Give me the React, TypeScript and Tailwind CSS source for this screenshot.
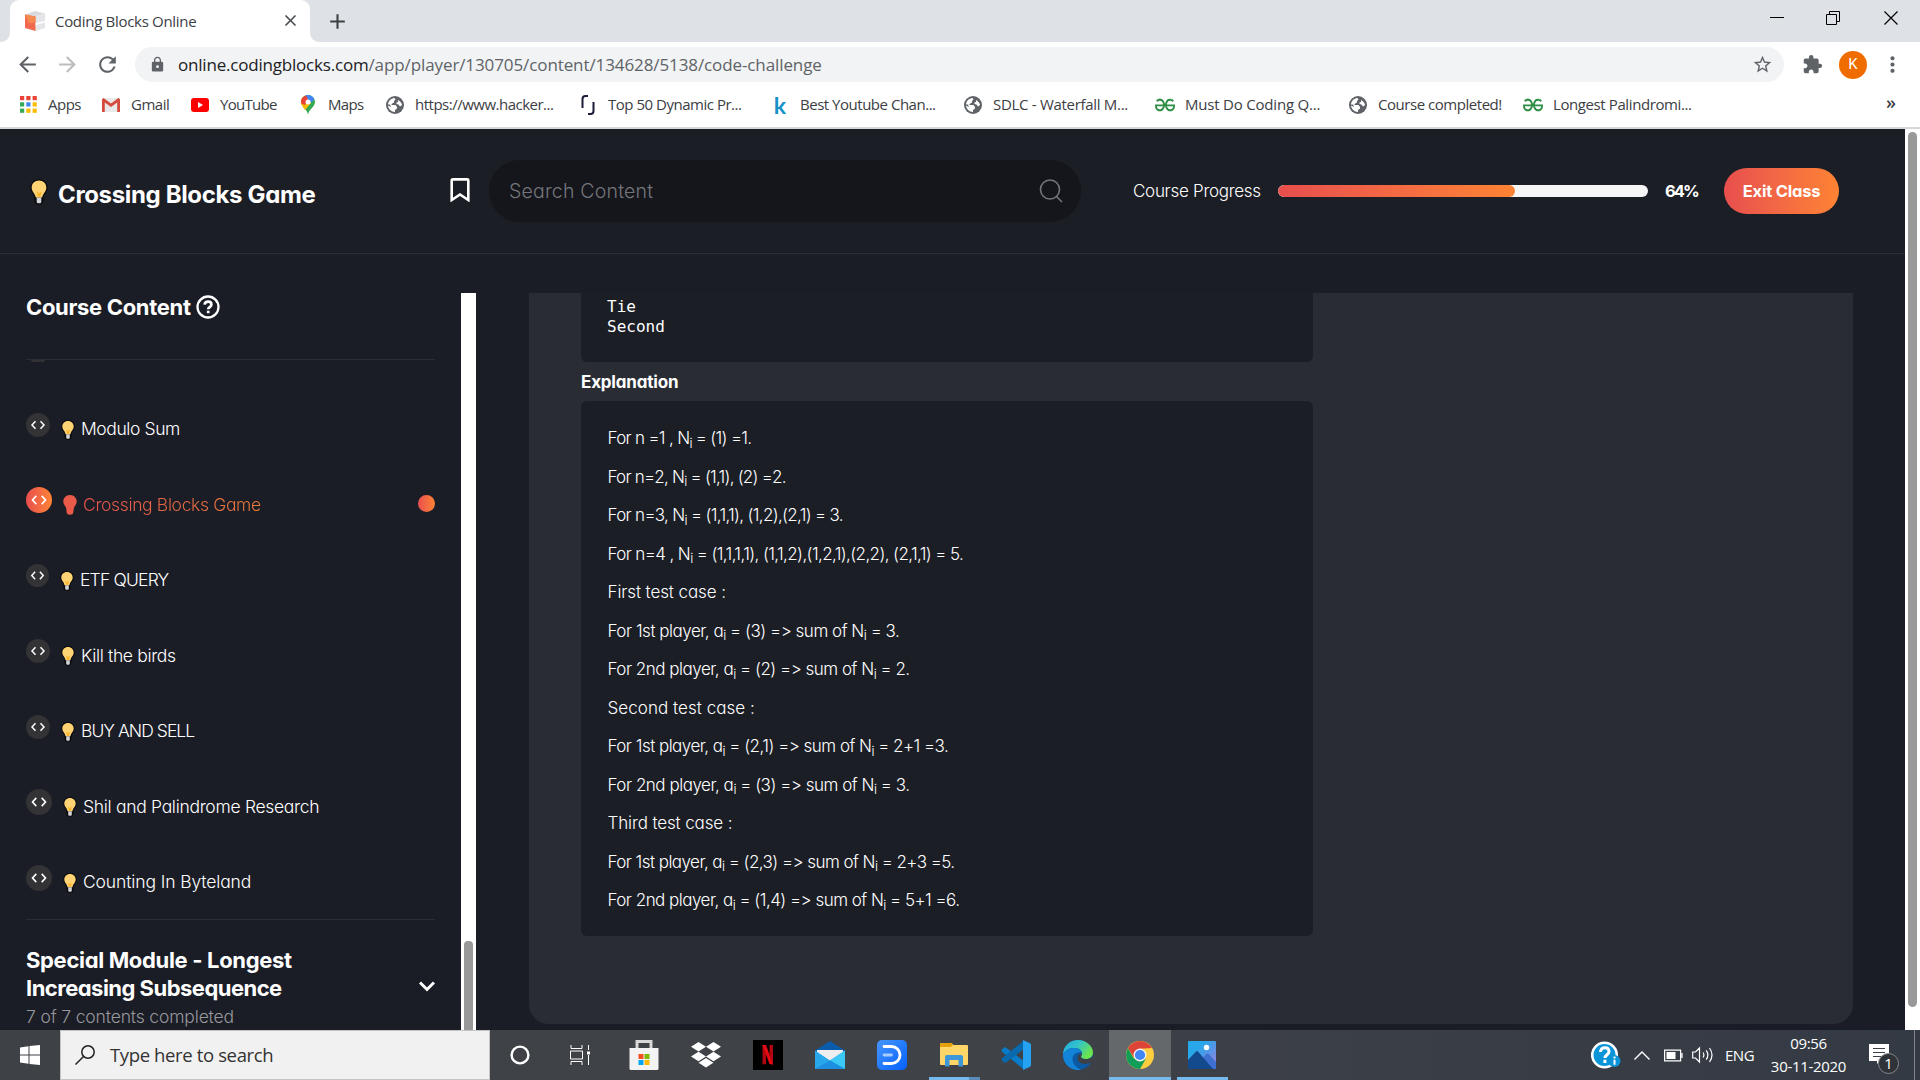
import React, { Fragment, ReactNode } from 'react';
import {
  MdAdd,
  MdArrowBack,
  MdArrowForward,
  MdClose,
  MdExtension,
  MdLock,
  MdMoreVert,
  MdRefresh,
  MdStarBorder,
} from 'react-icons/md';
import { SiGeeksforgeeks } from 'react-icons/si';

/* ---------- small drawings ---------- */

const bulbOutline =
  'M7 0C3 0 .3 2.900.3 6.600c0 2.600 1.700 4 2.600 6 .6 1.400.5 3 .8 5 .2 1.500 1.500 2.200 3.300 2.200s3.100-.7 3.300-2.200c.3-2 .2-3.600.8-5 .9-2 2.600-3.400 2.600-6C13.700 2.900 11 0 7 0z';

function Bulb({ className, flat = false }: { className: string; flat?: boolean }) {
  if (flat) {
    return (
      <svg viewBox="0 0 14 20" className={className}>
        <path d={bulbOutline} fill="#ea5a48" />
      </svg>
    );
  }
  return (
    <svg viewBox="0 0 14 20" className={className}>
      <path d={bulbOutline} fill="#08090c" />
      <path d="M7 1C3.700 1 1.300 3.400 1.300 6.600c0 3 2.700 4.400 3.200 7.600h5c.5-3.200 3.200-4.600 3.200-7.600C12.700 3.400 10.300 1 7 1z" fill="#ffd274" />
      <path d="M5 9.500l1.200 4.500h1.600L9 9.500 7 11z" fill="#fcb52a" />
      <path d="M5.200 14.200h3.600v3.600c0 .6-.6 1-1.800 1s-1.800-.4-1.800-1z" fill="#d4d4d8" />
    </svg>
  );
}

function CodeGlyph({ className }: { className: string }) {
  return (
    <svg viewBox="0 0 24 24" className={className} fill="none" stroke="currentColor" strokeWidth="1.500">
      <path d="M9.500 8.200L6 12l3.500 3.800M14.500 8.200L18 12l-3.500 3.800" />
    </svg>
  );
}

function Favicon() {
  return (
    <svg viewBox="0 0 20 20" className="h-5 w-5">
      <path d="M0 3.500L10 0l10 2.500-9.500 3z" fill="#d9dadd" />
      <path d="M10.500 5L20 2.500V17l-9.500 3z" fill="#e4e5e8" />
      <path d="M0 3.500L10.500 5.500v6L10.500 20 0 17z" fill="#f06a50" />
      <path d="M0 3.500L10.500 5.500v6L4 12.500z" fill="#f58a50" />
      <path d="M10.500 12l9.500-2v1.500l-9.500 2.500z" fill="#fff" />
    </svg>
  );
}

function AppsGrid() {
  const colors = ['#ea4335', '#ea4335', '#ea4335', '#34a853', '#4285f4', '#fbbc04', '#34a853', '#fbbc04', '#fbbc04'];
  return (
    <svg viewBox="0 0 17 17" className="h-[17px] w-[17px]">
      {colors.map((c, i) => (
        <rect key={i} x={(i % 3) * 6.3} y={Math.floor(i / 3) * 6.3} width="4.2" height="4.2" fill={c} />
      ))}
    </svg>
  );
}

function GmailIcon() {
  return (
    <svg viewBox="0 0 18 14" className="h-[14px] w-[18px]">
      <rect width="18" height="14" rx="1" fill="#e9e9e9" />
      <path d="M0 1.200v12.800h2.800V4.500L9 9l6.200-4.500V14H18V1.200L16.400 0 9 5.500 1.600 0z" fill="#d54b3d" />
    </svg>
  );
}

function YoutubeIcon() {
  return (
    <svg viewBox="0 0 18 14" className="h-[14px] w-[18px]">
      <rect width="18" height="14" rx="3" fill="#f00" />
      <path d="M7 4l5 3-5 3z" fill="#fff" />
    </svg>
  );
}

function MapsPin() {
  return (
    <svg viewBox="0 0 14 20" className="h-5 w-[14px]">
      <path d="M7 20c0-5 7-8 7-13a7 7 0 0 0-14 0c0 5 7 8 7 13z" fill="#34a853" />
      <path d="M.8 10.200A7 7 0 0 1 1.600 2.500L7 7l-4.700 5.600C1.700 11.800 1.100 11 .8 10.200z" fill="#fbbc04" />
      <path d="M1.600 2.500A7 7 0 0 1 4.800.4L9 4.500 3.500 10 .3 8.500C-.4 6 .2 4.200 1.600 2.500z" fill="#ea4335" />
      <path d="M4.800.35A7 7 0 0 1 13.300 4L8 10 7 4z" fill="#4285f4" />
      <path d="M2.200 12.500L8.500 5l1.500 3-6 7z" fill="#fbbc04" />
      <circle cx="7" cy="7" r="2.500" fill="#fff" />
    </svg>
  );
}

function Globe() {
  return (
    <svg viewBox="0 0 18 18" className="h-[18px] w-[18px]">
      <circle cx="9" cy="9" r="9" fill="#5f6368" />
      <path d="M2 8.500C2.300 5 5 2.300 8.500 2L9.500 3.500 8 5v1.500L5.500 8v1h4l1.500 2v1.500L9 14v2C5.300 15.800 2.300 13 2 9.500l3 1.500L4 8.500z" fill="#fff" />
      <path d="M12 4c2.200 1.200 3.800 3 4 5l-2 1.500-1.500-2-2-.5V6.500l1.500-.5z" fill="#fff" />
    </svg>
  );
}

function HookIcon() {
  return (
    <svg viewBox="0 0 14 20" className="h-5 w-[14px]" fill="none" stroke="#1d1b3a" strokeWidth="2">
      <path d="M1.500 13V4Q1.500 1 4.500 1H7M12.500 7v9q0 3-3 3H7" />
    </svg>
  );
}

/* ---------- browser chrome ---------- */

function TabStrip() {
  return (
    <div className="flex h-[42px] shrink-0 items-stretch bg-[#dee1e6] text-[#3c4043]">
      <div className="flex w-[10px] items-end bg-white">
        <div className="h-full w-full rounded-br-[9px] bg-[#dee1e6]" />
      </div>
      <div className="flex w-[300px] bg-[#dee1e6]">
        <div className="flex w-full items-center rounded-t-[9px] bg-white pb-px pl-[15px] pr-[10px]">
          <Favicon />
          <span className="ml-[10px] grow whitespace-nowrap text-[15px] leading-5 tracking-[-0.3px]">Coding Blocks Online</span>
          <MdClose className="h-[19px] w-[19px] text-[#45494d]" />
        </div>
      </div>
      <div className="flex w-[10px] bg-white">
        <div className="h-full w-full rounded-bl-[9px] bg-[#dee1e6]" />
      </div>
      <div className="flex grow items-center justify-between pl-[5px] pr-[22px]">
        <MdAdd className="h-[25px] w-[25px]" />
        <div className="flex items-center pb-[6px] text-black">
          <svg viewBox="0 0 14 14" className="mr-[42px] h-[14px] w-[14px]">
            <path d="M0 6.500h14" stroke="currentColor" />
          </svg>
          <svg viewBox="0 0 14 14" className="mr-[44px] h-[14px] w-[14px]" fill="none" stroke="currentColor">
            <path d="M.5 3.500h10v10H.500zM3.500 3V.5h10v10H11" />
          </svg>
          <svg viewBox="0 0 14 14" className="h-[14px] w-[14px]" stroke="currentColor" strokeWidth="1.200">
            <path d="M.5.5l13 13M13.500.5l-13 13" />
          </svg>
        </div>
      </div>
    </div>
  );
}

function Toolbar() {
  return (
    <div className="flex h-[45px] shrink-0 items-center bg-white pl-[15px] text-[#5f6368]">
      <MdArrowBack className="h-[25px] w-[25px]" />
      <MdArrowForward className="ml-[15px] h-[25px] w-[25px] text-[#babcbe]" />
      <MdRefresh className="ml-[15px] h-[25px] w-[25px]" />
      <div className="ml-[15px] flex h-[35px] w-[1649px] items-center rounded-full bg-[#f1f3f4] pl-[14px] pr-[11px]">
        <MdLock className="h-[17px] w-[17px]" />
        <div className="ml-[12px] grow whitespace-nowrap text-[17px]">
          <span className="tracking-[-0.2px] text-[#202124]">online.codingblocks.com</span>
          <span className="tracking-[-0.1px]">/app/player/130705/content/134628/5138/code-challenge</span>
        </div>
        <MdStarBorder className="h-[21px] w-[21px]" />
      </div>
      <MdExtension className="ml-[18px] h-[21px] w-[21px]" />
      <div className="ml-[16px] flex h-7 w-7 items-center justify-center rounded-full bg-[#ef6c00] font-['Roboto'] text-[15px] text-white">K</div>
      <MdMoreVert className="ml-[13px] h-[25px] w-[25px]" />
    </div>
  );
}

const globe = <Globe />;
const gfg = <SiGeeksforgeeks className="h-5 w-5 scale-y-125 text-[#2f8d46]" />;

const bookmarks: { label: string; icon: ReactNode; cls: string; track: string }[] = [
  { label: 'Apps', icon: <AppsGrid />, cls: 'w-[83px]', track: 'tracking-[-0.5px]' },
  { label: 'Gmail', icon: <GmailIcon />, cls: 'w-[89px]', track: 'tracking-[-0.5px]' },
  { label: 'YouTube', icon: <YoutubeIcon />, cls: 'w-[108px]', track: 'tracking-[-0.7px]' },
  { label: 'Maps', icon: <MapsPin />, cls: 'w-[87px]', track: 'tracking-[-0.7px]' },
  { label: 'https://www.hacker...', icon: globe, cls: 'w-[193px]', track: 'tracking-[-0.5px]' },
  { label: 'Top 50 Dynamic Pr...', icon: <HookIcon />, cls: 'w-[192px]', track: 'tracking-[-0.48px]' },
  {
    label: 'Best Youtube Chan...',
    icon: <b className="font-['Lato'] text-[23px] font-bold leading-5 text-[#1492c8]">k</b>,
    cls: 'w-[193px]',
    track: 'tracking-[-0.48px]',
  },
  { label: 'SDLC - Waterfall M...', icon: globe, cls: 'w-[192px]', track: 'tracking-[-0.3px]' },
  { label: 'Must Do Coding Q...', icon: gfg, cls: 'w-[193px]', track: 'tracking-[-0.2px]' },
  { label: 'Course completed!', icon: globe, cls: 'w-[175px]', track: 'tracking-[-0.46px]' },
  { label: 'Longest Palindromi...', icon: gfg, cls: 'w-[180px]', track: 'tracking-[-0.4px]' },
];

function BookmarksBar() {
  return (
    <div className="flex h-[42px] shrink-0 items-center border-b-2 border-[#d5d7db] bg-white pb-[5px] pl-[18px] text-[15px] text-[#3c4043]">
      {bookmarks.map((b) => (
        <div key={b.label} className={`${b.cls} flex shrink-0 items-center gap-[10px]`}>
          <span className="flex h-6 w-5 shrink-0 items-center justify-center">{b.icon}</span>
          <span className={`${b.track} whitespace-nowrap`}>{b.label}</span>
        </div>
      ))}
      <span className="ml-auto mr-[24px] pb-1 text-[18px] font-semibold">»</span>
    </div>
  );
}

/* ---------- page header ---------- */

function Header() {
  return (
    <header className="flex h-[125px] shrink-0 items-center border-b border-[#2b2d36] bg-[#1c1e26] pl-[30px]">
      <div className="mt-[3px] flex h-[31px] w-[420px] items-end">
        <Bulb className="mb-[3px] h-[26px] w-[18px] shrink-0" />
        <h1 className="ml-[10px] h-[27px] whitespace-nowrap text-[24px] font-bold leading-[27px] tracking-[-0.35px]">Crossing Blocks Game</h1>
      </div>
      <svg viewBox="0 0 20 24" className="mb-[2px] h-6 w-5 shrink-0" fill="none" stroke="white" strokeWidth="2.600">
        <path d="M1.700 2.500Q1.700 1.400 2.800 1.400H17.200Q18.300 1.400 18.300 2.500V22L10 16.500 1.700 22z" />
      </svg>
      <div className="ml-[19px] flex h-[62px] w-[592px] shrink-0 items-center justify-between rounded-full bg-[#15161b] pl-[20px] pr-[18px]">
        <span className="pt-[2px] text-[19.5px] font-light tracking-[0.2px] text-[#74757a]">Search Content</span>
        <svg viewBox="0 0 24 24" className="mb-px h-6 w-6" fill="none" stroke="#74757a" strokeWidth="1.600">
          <circle cx="11" cy="10.500" r="9.500" />
          <path d="M17.500 17.500L23 23" />
        </svg>
      </div>
      <span className="ml-[52px] w-[145px] shrink-0 whitespace-nowrap pt-px text-[17px] font-[350] tracking-[-0.28px]">Course Progress</span>
      <div className="h-3 w-[370px] shrink-0 overflow-hidden rounded-full bg-[#f6f6f6]">
        <div className="h-full w-[237px] rounded-full bg-linear-to-r from-[#e84e4d] to-[#fd8333]" />
      </div>
      <span className="ml-[17px] w-[59px] shrink-0 text-[16.5px] font-bold tracking-[-1.9px]">64%</span>
      <button className="h-[46px] w-[115px] shrink-0 rounded-full bg-linear-to-r from-[#e84e4d] to-[#fd8333] text-[16.5px] font-bold tracking-[-0.2px]">
        Exit Class
      </button>
    </header>
  );
}

/* ---------- sidebar ---------- */

const lessons = [
  { title: 'Modulo Sum', size: 'h-6 w-6', track: 'tracking-[-0.4px]' },
  { title: 'Crossing Blocks Game', size: 'h-[26px] w-[26px]', track: 'tracking-[-0.35px]', active: true },
  { title: 'ETF QUERY', size: 'h-[23px] w-[23px]', track: 'tracking-[-0.8px]' },
  { title: 'Kill the birds', size: 'h-6 w-6', track: 'tracking-[-0.35px]' },
  { title: 'BUY AND SELL', size: 'h-6 w-6', track: 'tracking-[-0.95px]' },
  { title: 'Shil and Palindrome Research', size: 'h-[26px] w-[26px]', track: 'tracking-[-0.3px]' },
  { title: 'Counting In Byteland', size: 'h-[26px] w-[26px]', track: 'tracking-[-0.12px]' },
];

function Sidebar() {
  return (
    <div className="flex h-full w-[476px] shrink-0">
      <aside className="ml-[26px] flex w-[409px] flex-col">
        <div className="flex h-[67px] items-center gap-[5px] border-b border-[#2b2d36] pb-[38px]">
          <h2 className="text-[22px] font-bold tracking-[-0.33px]">Course Content</h2>
          <svg viewBox="0 0 24 24" className="h-6 w-6" fill="none" stroke="white" strokeWidth="2.300">
            <circle cx="12" cy="12" r="10.500" />
            <path d="M8.600 9.600C8.900 7.500 10.300 6.700 12.100 6.700c2 0 3.300 1.100 3.300 2.800 0 2.600-3.100 2.500-3.200 4.700" strokeWidth="2.700" />
            <path d="M12.200 15.700v2.500" strokeWidth="2.700" />
          </svg>
        </div>
        <div className="flex h-[31px] overflow-hidden">
          <div className="ml-[5px] h-[2px] w-[14px] rounded-b-full bg-[#333335]" />
        </div>
        <div className="flex h-[527.5px] flex-col">
          {lessons.map((l) => (
            <div key={l.title} className="flex h-[75.5px] shrink-0 items-center">
              <span
                className={`${l.size} ${l.active ? 'bg-linear-to-r from-[#e84e4d] to-[#fd8333]' : 'bg-[#333335]'} mb-[8px] flex shrink-0 items-center justify-center rounded-full`}
              >
                <CodeGlyph className="h-full w-full" />
              </span>
              <Bulb className="ml-[11px] mt-[2px] h-5 w-[14px] shrink-0" flat={l.active} />
              {l.active ? (
                <>
                  <span
                    className={`${l.track} ml-[6px] whitespace-nowrap bg-linear-to-r from-[#e5534b] to-[#e87a38] bg-clip-text pt-px text-[17.5px] font-light text-transparent`}
                  >
                    {l.title}
                  </span>
                  <span className="mb-px ml-auto h-[17px] w-[17px] rounded-full bg-linear-to-r from-[#e84e4d] to-[#fd8333]" />
                </>
              ) : (
                <span className={`${l.track} ml-[6px] whitespace-nowrap pt-px text-[17.5px] font-[350]`}>{l.title}</span>
              )}
            </div>
          ))}
        </div>
        <div className="flex grow items-start justify-between border-t border-[#2b2d36] pt-[26px]">
          <div className="whitespace-nowrap">
            <h3 className="text-[22px] font-bold leading-7 tracking-[-0.33px]">Special Module - Longest</h3>
            <h3 className="text-[22px] font-bold leading-7 tracking-[-0.52px]">Increasing Subsequence</h3>
            <p className="pt-px text-[17.5px] font-light leading-7 tracking-[-0.15px] text-[#97989c]">7 of 7 contents completed</p>
          </div>
          <svg viewBox="0 0 16 11" className="mt-[35px] h-[11px] w-4" fill="none" stroke="white" strokeWidth="3">
            <path d="M1 1.500l7 7 7-7" />
          </svg>
        </div>
      </aside>
      <div className="ml-[26px] flex w-[15px] items-end justify-center bg-white">
        <div className="h-[90px] w-[9px] rounded-t-[4px] bg-[#999]" />
      </div>
    </div>
  );
}

/* ---------- explanation panel ---------- */

const lines: [string, string][] = [
  ['For n =1 , N_i = (1) =1.', 'tracking-[-0.69px]'],
  ['For n=2, N_i = (1,1), (2) =2.', 'tracking-[-0.76px]'],
  ['For n=3, N_i = (1,1,1), (1,2),(2,1) = 3.', 'tracking-[-0.68px]'],
  ['For n=4 , N_i = (1,1,1,1), (1,1,2),(1,2,1),(2,2), (2,1,1) = 5.', 'tracking-[-0.61px]'],
  ['First test case :', 'tracking-[-0.1px]'],
  ['For 1st player, a_i = (3) => sum of N_i = 3.', 'tracking-[-0.48px]'],
  ['For 2nd player, a_i = (2) => sum of N_i = 2.', 'tracking-[-0.49px]'],
  ['Second test case :', 'tracking-[0.05px]'],
  ['For 1st player, a_i = (2,1) => sum of N_i = 2+1 =3.', 'tracking-[-0.52px]'],
  ['For 2nd player, a_i = (3) => sum of N_i = 3.', 'tracking-[-0.48px]'],
  ['Third test case :', 'tracking-[-0.12px]'],
  ['For 1st player, a_i = (2,3) => sum of N_i = 2+3 =5.', 'tracking-[-0.55px]'],
  ['For 2nd player, a_i = (1,4) => sum of N_i = 5+1 =6.', 'tracking-[-0.52px]'],
];

function Panel() {
  return (
    <section className="ml-[53px] h-[731px] w-[1324px] rounded-b-[20px] bg-[#2a2c34] pl-[52px]">
      <pre className="h-[69px] w-[732px] rounded-b-[6px] bg-[#1c1e26] pl-[26px] pt-[4px] font-['DejaVu_Sans_Mono',monospace] text-[16px] leading-5">
        {'Tie\nSecond'}
      </pre>
      <h4 className="flex h-[39px] items-center pt-[2px] text-[17px] font-bold tracking-[-0.18px]">Explanation</h4>
      <div className="h-[535px] w-[732px] rounded-[6px] bg-[#1c1e26] pl-[26.5px] pt-[18px]">
        {lines.map(([text, track], i) => (
          <p key={i} className={`${track} flex h-[38.5px] items-center whitespace-pre text-[17px] font-[350] leading-5`}>
            <span>
              {text.split('_i').map((part, j) => (
                <Fragment key={j}>
                  {j > 0 && <sub className="text-[13px]">i</sub>}
                  {part}
                </Fragment>
              ))}
            </span>
          </p>
        ))}
      </div>
    </section>
  );
}

/* ---------- taskbar ---------- */

const apps: { name: string; icon: ReactNode; cls?: string; bar?: string }[] = [
  {
    name: 'cortana',
    icon: (
      <svg viewBox="0 0 20 20" className="h-5 w-5">
        <circle cx="10" cy="10" r="8.400" fill="none" stroke="#fff" strokeWidth="2.400" />
      </svg>
    ),
  },
  {
    name: 'task view',
    icon: (
      <svg viewBox="0 0 21 20" className="mr-1 h-5 w-[21px]" fill="none" stroke="#fff">
        <path d="M1 0v3.500h11V0M1 20v-3.500h11V20M.5 6h12v8H.500zM18.500 0v5M18.500 10v10" />
        <path d="M17 6.500h3v3h-3z" fill="#fff" stroke="none" />
      </svg>
    ),
  },
  {
    name: 'store',
    icon: (
      <svg viewBox="0 0 30 30" className="h-[30px] w-[30px]">
        <path d="M8 8V1.500h14V8" fill="none" stroke="#d8d8d8" strokeWidth="3" />
        <path d="M.5 8h29v20.500q0 1.500-1.500 1.500H2q-1.500 0-1.500-1.500z" fill="#f3f3f3" />
        <path d="M9.500 14h5v5h-5z" fill="#f25022" />
        <path d="M15.500 14h5v5h-5z" fill="#7fba00" />
        <path d="M9.500 20h5v5h-5z" fill="#00a4ef" />
        <path d="M15.500 20h5v5h-5z" fill="#ffb900" />
      </svg>
    ),
  },
  {
    name: 'dropbox',
    icon: (
      <svg viewBox="0 0 30 26" className="h-[26px] w-[30px]" fill="#fff">
        <path d="M7.500 0L15 4.800 7.500 9.600 0 4.800zM22.500 0L30 4.800 22.500 9.600 15 4.800zM7.500 9.800L15 14.600 7.500 19.300 0 14.600zM22.500 9.800L30 14.600 22.500 19.300 15 14.600zM15 16l7.400 4.800L15 25.600 7.600 20.800z" />
      </svg>
    ),
  },
  {
    name: 'netflix',
    icon: (
      <svg viewBox="0 0 30 30" className="h-[30px] w-[30px]">
        <path d="M0 0h30v30H0z" fill="#000" />
        <path d="M9.500 5h3.500v19l-3.500.5zM16.500 5H20v19.500l-3.500-.5z" fill="#b1060f" />
        <path d="M9.500 5H13l7 19.500-3.500-.5z" fill="#e50914" />
      </svg>
    ),
  },
  {
    name: 'mail',
    icon: (
      <svg viewBox="0 0 30 28" className="h-7 w-[30px]">
        <path d="M0 9.500L15 0l15 9.500v3H0z" fill="#0a5cab" />
        <path d="M2 9h26v6L15 20 2 15z" fill="#eeeef0" />
        <path d="M0 9.500L15 19.500 30 9.500V28H0z" fill="#28a8ea" />
        <path d="M15 19.500L30 9.500V28z" fill="#3cc8f5" />
        <path d="M0 28h30L15 19.500z" fill="#1c8fe0" />
      </svg>
    ),
  },
  {
    name: 'dictation',
    icon: (
      <svg viewBox="0 0 30 30" className="h-[30px] w-[30px]" fill="none" strokeLinecap="round">
        <defs>
          <linearGradient id="dblue" x1="0" y1="0" x2="1" y2="1">
            <stop stopColor="#4596ff" />
            <stop offset="1" stopColor="#0561fb" />
          </linearGradient>
        </defs>
        <rect width="30" height="30" rx="5" fill="url(#dblue)" />
        <path d="M7 6.500h7.500a8.300 8.300 0 0 1 0 17H7" stroke="#fff" strokeWidth="2.800" />
        <path d="M7 15h7.500" stroke="#a8ccff" strokeWidth="2.800" />
      </svg>
    ),
  },
  {
    name: 'explorer',
    bar: 'w-[51px] border-r-[11px] border-[#5a8bb8]',
    icon: (
      <svg viewBox="0 0 28 24" className="mb-[1px] h-6 w-7">
        <path d="M0 1q0-1 1-1h10.500l2 2H27q1 0 1 1v18q0 1-1 1H1q-1 0-1-1z" fill="#ffd667" />
        <path d="M0 1q0-1 1-1h10.500l1.500 2-2.500 2H0z" fill="#e3a008" />
        <path d="M5 23.500V14q0-2 2-2h14q2 0 2 2v9.500h-4.500V17h-9v6.500z" fill="#3d97d8" />
      </svg>
    ),
  },
  {
    name: 'vscode',
    icon: (
      <svg viewBox="0 0 30 30" className="h-[30px] w-[30px]">
        <path d="M1 9.500l2-2q1-.8 2.200.2L23 21v8.500L1 11.800Q0 10.600 1 9.500z" fill="#0a7bc8" />
        <path d="M1 20.500l2 2q1 .8 2.200-.2L23 9V.5L1 18.200Q0 19.400 1 20.500z" fill="#0869ad" />
        <path d="M22 0l7 3.200q1 .5 1 1.800v20q0 1.300-1 1.800L22 30z" fill="#25a2f2" />
      </svg>
    ),
  },
  {
    name: 'edge',
    icon: (
      <svg viewBox="0 0 30 30" className="h-[30px] w-[30px]">
        <defs>
          <linearGradient id="edgeTop" x1="0" y1="0" x2="1" y2=".5">
            <stop stopColor="#25a9e0" />
            <stop offset=".5" stopColor="#33c3c9" />
            <stop offset="1" stopColor="#6be34b" />
          </linearGradient>
        </defs>
        <circle cx="15" cy="15" r="15" fill="#0c59a4" />
        <path d="M0 15C0 6 7 0 15 0s15 6 15 12.500c0 4-3 6.500-7 6.500-3.500 0-5-1.200-5-2.200 0-.8 1-1.500 1-3.600C19 10 15.500 8 11 8 5 8 1 11.500 0 15z" fill="url(#edgeTop)" />
        <path d="M0 15c1-4 5-7 11-7 4 0 7 1.700 7.800 4.500C13 11 9.500 15 9.500 19c0 5 4 9 8.500 10.700C8 31.500 0 24 0 15z" fill="#1383d8" />
        <path d="M18 17c0 1 1.500 2.200 5 2.200 3 0 4.800-1 7-2.700v5l-2.500 1c-6 3-12 1-13-3.500-.4-2 1-5 4-6 .2 1.500-.5 2-.5 4z" fill="#3d4146" />
      </svg>
    ),
  },
  {
    name: 'chrome',
    cls: 'bg-[#65686b]',
    bar: 'w-[62px]',
    icon: (
      <svg viewBox="0 0 28 28" className="h-7 w-7">
        <circle cx="14" cy="14" r="14" fill="#ffcd40" />
        <path d="M1.900 7A14 14 0 0 1 26.100 7L14 7.800 7.500 16z" fill="#db4437" />
        <path d="M1.900 7A14 14 0 0 0 14 28l6-10.500L14 20l-6.500-3z" fill="#0f9d58" />
        <circle cx="14" cy="14" r="6.500" fill="#f1f1f1" />
        <circle cx="14" cy="14" r="5.100" fill="#4285f4" />
      </svg>
    ),
  },
  {
    name: 'photos',
    bar: 'w-[51px]',
    icon: (
      <svg viewBox="0 0 28 28" className="h-7 w-7">
        <defs>
          <linearGradient id="sky" x1="0" y1="0" x2="1" y2="1">
            <stop offset=".3" stopColor="#28a8ea" />
            <stop offset="1" stopColor="#a07be0" />
          </linearGradient>
        </defs>
        <rect width="28" height="28" rx="1" fill="url(#sky)" />
        <path d="M10 22l8.500-9q1-.8 2 0L28 21v7H10z" fill="#3f6fd0" />
        <path d="M0 19l8-8.500q1-1 2 0L25 28H0z" fill="#134a8e" />
        <circle cx="18.500" cy="6.500" r="2.700" fill="#fff" />
      </svg>
    ),
  },
];

function Taskbar() {
  return (
    <footer className="flex h-[50px] shrink-0 items-stretch bg-linear-to-r from-[#3e4146] via-[#3f4247] to-[#343a44] font-['Open_Sans','Noto_Sans',sans-serif]">
      <div className="flex w-[60px] items-center justify-center">
        <svg viewBox="0 0 20 20" className="h-5 w-5" fill="#fff">
          <path d="M0 2.500L8.500 1.300V9.500H0zM9.500 1.100L20 0v9.500H9.500zM0 10.500h8.500v8.200L0 17.500zM9.500 10.500H20V20L9.500 18.900z" />
        </svg>
      </div>
      <div className="flex w-[430px] shrink-0 items-center border border-[#c4c4c4] bg-[#f1f1f1] pl-[14px] text-[#333]">
        <svg viewBox="0 0 20 20" className="h-5 w-5" fill="none" stroke="#222" strokeWidth="1.500">
          <circle cx="13" cy="7" r="6.200" />
          <path d="M8.500 11.500L.5 19.500" />
        </svg>
        <span className="ml-[15px] text-[18.5px] tracking-[-0.37px]">Type here to search</span>
      </div>
      <div className="-ml-px flex">
        {apps.map((a) => (
          <div key={a.name} className={`${a.cls ?? ''} relative flex w-[62px] shrink-0 items-center justify-center`}>
            {a.icon}
            {a.bar && (
              <div className="absolute inset-x-0 bottom-0 flex justify-center">
                <div className={`${a.bar} h-[3px] bg-[#76b9ed]`} />
              </div>
            )}
          </div>
        ))}
      </div>
      <div className="ml-auto flex items-center pr-[5px]">
        <svg viewBox="0 0 30 28" className="h-7 w-[30px]">
          <circle cx="13.500" cy="14" r="12.300" fill="#0b94d8" stroke="#fff" strokeWidth="2.600" />
          <path d="M9.500 11c.2-3 2-4.200 4.300-4.200 2.500 0 4.200 1.500 4.200 3.700 0 3.200-4 3.200-4.100 6.500M13.900 18.700v3.200" fill="none" stroke="#fff" strokeWidth="3" />
          <circle cx="23.500" cy="20" r="6" fill="#0b94d8" />
          <path d="M23.500 15.500v2M23.500 18.800v5" stroke="#fff" strokeWidth="2" />
        </svg>
        <svg viewBox="0 0 16 9" className="ml-[13px] h-[9px] w-4" fill="none" stroke="#fff" strokeWidth="1.400">
          <path d="M.5 8.500L8 1l7.500 7.500" />
        </svg>
        <svg viewBox="0 0 20 13" className="ml-[14px] h-[13px] w-5" fill="none" stroke="#fff" strokeWidth="1.200">
          <path d="M.6 1.100h16v10.800H.600zM18 4v5" />
          <path d="M2.500 3h9v7h-9z" fill="#fff" stroke="none" />
        </svg>
        <svg viewBox="0 0 22 18" className="ml-[8px] h-[18px] w-[22px]" fill="none" stroke="#fff" strokeWidth="1.200">
          <path d="M.7 6h2.800L7.500 2v14L3.500 12H.7zM11 6.500q1.800 2.500 0 5M14.200 4.300q3.300 4.700 0 9.400M17.500 2q5 7 0 14" />
        </svg>
        <span className="ml-[11px] w-[45px] text-[15px] tracking-[-0.5px]">ENG</span>
        <div className="flex w-[77px] flex-col items-center whitespace-nowrap text-[15px] leading-[23px] tracking-[-0.3px]">
          <span>09:56</span>
          <span>30-11-2020</span>
        </div>
        <div className="relative ml-[22px] h-[22px] w-[45px]">
          <svg viewBox="0 0 20 20" className="h-5 w-5">
            <path d="M0 0h20v17h-9l-3 3v-3H0z" fill="#fff" />
            <path d="M4 4.500h12M4 8.500h12M4 12.500h8" stroke="#3a3f46" strokeWidth="1.200" />
          </svg>
          <span className="absolute left-[9px] top-[9px] flex h-[21px] w-[21px] items-center justify-center rounded-full border border-[#85888c] bg-[#2f3237] text-[15px] leading-none">
            1
          </span>
        </div>
        <div className="h-[50px] w-px bg-[#80848a]" />
      </div>
    </footer>
  );
}

export default function App() {
  return (
    <div className="flex h-[1080px] w-[1920px] flex-col overflow-hidden bg-[#1b1d26] font-['Open_Sans','Noto_Sans',sans-serif] text-white">
      <TabStrip />
      <Toolbar />
      <BookmarksBar />
      <div className="flex h-[901px] shrink-0">
        <div className="flex w-[1905px] shrink-0 flex-col font-['Inter',sans-serif] [font-feature-settings:'cv11']">
          <Header />
          <main className="flex grow pt-[39px]">
            <Sidebar />
            <Panel />
          </main>
        </div>
        <div className="flex w-[15px] justify-center bg-white pt-[3px]">
          <div className="h-[875px] w-[9px] rounded-full bg-[#999]" />
        </div>
      </div>
      <Taskbar />
    </div>
  );
}
